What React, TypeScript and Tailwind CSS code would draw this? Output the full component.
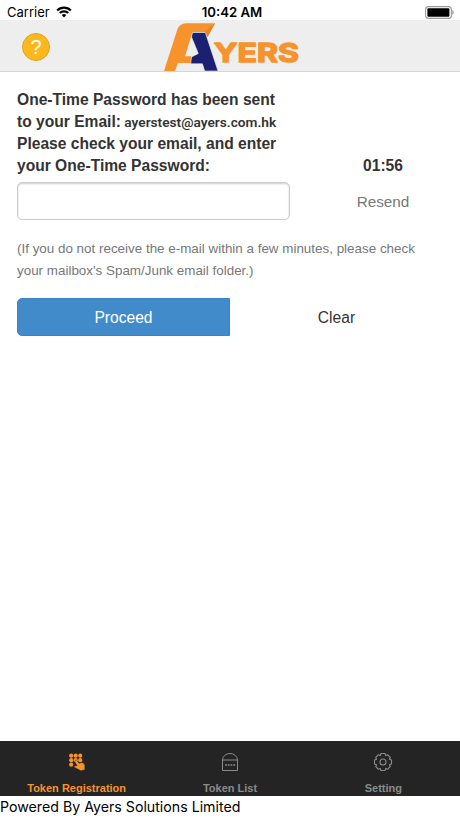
import type { ReactNode } from "react";

type TabProps = {
  label: string;
  active?: boolean;
  icon: ReactNode;
};

function WifiIcon() {
  return (
    <svg width="16" height="12" viewBox="0 0 16 12" fill="none" stroke="#000" strokeWidth="2.1">
      <path d="M1.2 4.4a9.6 9.6 0 0 1 13.6 0" />
      <path d="M3.8 7.1a6 6 0 0 1 8.4 0" />
      <path d="M8 11.4 5.7 9a3.3 3.3 0 0 1 4.6 0z" fill="#000" stroke="none" />
    </svg>
  );
}

function BatteryIcon() {
  return (
    <svg width="29" height="13" viewBox="0 0 29 13">
      <rect x="0.6" y="0.6" width="25.8" height="11.8" rx="3" fill="none" stroke="#9a9a9a" strokeWidth="1.1" />
      <rect x="2.4" y="2.3" width="22" height="8.4" rx="1" fill="#000" />
      <path d="M27.4 4.3c1.6.6 1.6 3.8 0 4.4z" fill="#888" />
    </svg>
  );
}

function AyersLogo() {
  return (
    <svg width="138" height="51" viewBox="163 20 138 51">
      <defs>
        <linearGradient id="fold" x1="0" y1="0" x2="1" y2="1">
          <stop offset="0" stopColor="#f7932d" />
          <stop offset="1" stopColor="#d5771f" />
        </linearGradient>
      </defs>
      <path d="M164 71 177.500 29Q180 23.300 186 23.200H215L207.500 37 204.500 32H192.500L185 56.300H191V63H178L175 71Z" fill="#f7932d" />
      <path d="M204 31.500 215 23.200 207.500 37Z" fill="url(#fold)" />
      <path d="M192.500 32.500H205.300L218 71H204.700L202.400 63.800H190.700L191.500 57 198.300 53.500 191.500 37Z" fill="#1b2170" stroke="#eee" strokeWidth="0.6" />
      <text
        x="214"
        y="62.300"
        textLength="85"
        lengthAdjust="spacingAndGlyphs"
        fontFamily="Inter, sans-serif"
        fontWeight="700"
        fontSize="26"
        fill="#f7932d"
        stroke="#f7932d"
        strokeWidth="1.4"
        strokeLinejoin="round"
      >
        YERS
      </text>
    </svg>
  );
}

function KeypadIcon() {
  return (
    <svg width="18" height="18" viewBox="0 0 18 18" fill="currentColor">
      <circle cx="3.200" cy="2.700" r="2.100" />
      <circle cx="7.700" cy="2.700" r="2.100" />
      <circle cx="12.200" cy="2.700" r="2.100" />
      <circle cx="3.200" cy="7.200" r="2.100" />
      <circle cx="7.700" cy="7.200" r="2.100" />
      <circle cx="12.200" cy="7.200" r="2.100" />
      <circle cx="3.200" cy="11.700" r="2.100" />
      <path
        d="M7.200 7.300q1.200-.8 2 .5l1.800 2.500 3-.7q2.400.3 2.800 2.800v4.300l-3.800 1-6.800-3.500q-.4-1.600 1.500-1.500l1.500.2-2.500-4.300z"
        stroke="#242424"
        strokeWidth="0.400"
      />
    </svg>
  );
}

function TokenIcon() {
  return (
    <svg width="18" height="20" viewBox="0 0 18 20" fill="none" stroke="currentColor" strokeWidth="1">
      <path d="M1.500 18.500V8a7.500 6.500 0 0 1 15 0v10.500z" />
      <path d="M1.500 8h15" />
      <path d="M4 13h10.500" strokeWidth="1.500" strokeDasharray="1.800 1" />
    </svg>
  );
}

function GearIcon() {
  return (
    <svg width="20" height="20" viewBox="0 0 20 20" fill="none" stroke="currentColor" strokeWidth="1.100">
      <path
        d="M8 1.500h4l.7 2.100 1.800-.9 2.800 2.800-.9 1.800 2.100.7v4l-2.100.7.9 1.800-2.800 2.800-1.800-.9-.7 2.100H8l-.7-2.100-1.800.9-2.800-2.800.9-1.800L1.500 12V8l2.100-.7-.9-1.800 2.800-2.800 1.800.9z"
        strokeLinejoin="round"
      />
      <circle cx="10" cy="10" r="3" />
    </svg>
  );
}

function Tab({ label, active = false, icon }: TabProps) {
  return (
    <button
      type="button"
      className={`flex flex-1 flex-col items-center pt-[11px] text-[11px] font-bold leading-[14px] ${active ? "text-[#f7932d]" : "text-[#8b8b8b]"}`}
    >
      <span className="flex h-5 items-center">{icon}</span>
      <span className="mt-[9px] whitespace-nowrap">{label}</span>
    </button>
  );
}

export default function App() {
  return (
    <div className="flex h-[818px] w-[460px] flex-col overflow-hidden bg-white font-['Liberation_Sans',Arial,sans-serif] text-[#333]">
      <div className="grid h-5 shrink-0 grid-cols-[150px_150px_1fr] items-center pl-[7px] pr-[6px] font-[Inter,sans-serif] text-[13px] leading-5 text-black">
        <div className="flex items-center gap-[6px] pt-0.5">
          <span>Carrier</span>
          <WifiIcon />
        </div>
        <span className="pt-0.5 text-center text-[13.2px] font-semibold">10:42 AM</span>
        <div className="flex justify-end pt-[3px]">
          <BatteryIcon />
        </div>
      </div>

      <header className="grid h-[52px] shrink-0 grid-cols-[163px_138px_1fr] items-center border-b border-[#d5d5d5] bg-[#eee]">
        <button
          type="button"
          aria-label="Help"
          className="ml-[22px] mt-[3px] flex size-7 items-center justify-center rounded-full border border-[#dda52b] bg-[#fdb91c] text-[20px] leading-none text-white"
        >
          ?
        </button>
        <AyersLogo />
      </header>

      <main className="flex-1 px-[17px] pt-[17px]">
        <div className="grid grid-cols-[273px_1fr] items-end text-[15.6px] font-bold leading-[22px]">
          <p className="whitespace-nowrap">
            One-Time Password has been sent
            <br />
            to your Email:{" "}
            <span className="-ml-px font-[Roboto,sans-serif] text-[13.7px] font-semibold leading-none">ayerstest@ayers.com.hk</span>
            <br />
            Please check your email, and enter
            <br />
            your One-Time Password:
          </p>
          <span className="pl-[33px] text-center">01:56</span>
        </div>

        <div className="mt-[5px] grid grid-cols-[273px_1fr] items-center">
          <input
            type="text"
            aria-label="One-Time Password"
            className="h-[38px] w-full rounded-[5px] border border-[#ccc] bg-white px-3 shadow-[inset_0_1px_2px_rgba(0,0,0,0.2)]"
          />
          <button type="button" className="pl-[33px] pt-0.5 text-center text-[15.3px] text-[#777]">
            Resend
          </button>
        </div>

        <p className="mt-[18px] whitespace-nowrap text-[13.42px] leading-[22px] text-[#777]">
          (If you do not receive the e-mail within a few minutes, please check
          <br />
          your mailbox's Spam/Junk email folder.)
        </p>

        <div className="mt-4 grid grid-cols-[213px_213px] text-[15.6px]">
          <button type="button" className="h-[38px] rounded-l-[5px] border border-[#3a84c2] bg-[#428bca] pt-px text-white">
            Proceed
          </button>
          <button type="button" className="h-[38px] pt-px">
            Clear
          </button>
        </div>
      </main>

      <nav className="flex h-[55px] shrink-0 bg-[#242424]">
        <Tab label="Token Registration" active icon={<KeypadIcon />} />
        <Tab label="Token List" icon={<TokenIcon />} />
        <Tab label="Setting" icon={<GearIcon />} />
      </nav>
      <footer className="h-[22px] shrink-0 font-[Inter,sans-serif] text-[14.2px] leading-[22px] text-black">
        Powered By Ayers Solutions Limited
      </footer>
    </div>
  );
}
